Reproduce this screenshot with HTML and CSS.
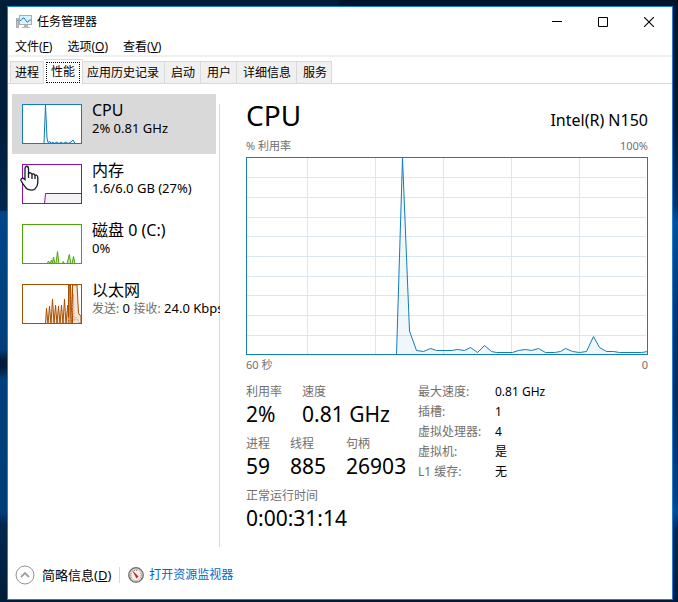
FILE: index.html
```
<!DOCTYPE html>
<html lang="zh-CN">
<head>
  <meta charset="UTF-8">
  <meta name="viewport" content="width=device-width, initial-scale=1.0">
  <title>任务管理器</title>
  <link rel="stylesheet" href="styles.css">
</head>
<body>
  <div class="window">
    <header class="titlebar">
      <svg class="app-icon" width="16" height="16" viewBox="0 0 16 16">
        <path d="M0.500 4.500h2v9h-2z" fill="#c4c7c9" stroke="#a4a8aa"/>
        <path d="M1 6.500h1" stroke="#4caf50"/>
        <rect x="3.500" y="1.500" width="12" height="9" fill="#dcf1fb" stroke="#a9adb0"/>
        <path d="M4 6.500h1l2-2.500h1l3 4h1l1.500-2h1.500" fill="none" stroke="#1d83b8"/>
        <path d="M8 11h4v2h2v1H6v-1h2z" fill="#b4b7b9"/>
      </svg>
      <h1 class="title">任务管理器</h1>
      <div class="window-controls">
        <button class="control-btn" aria-label="最小化">
          <svg width="10" height="10" viewBox="0 0 10 10"><path d="M0 4.500h10" stroke="#000"/></svg>
        </button>
        <button class="control-btn" aria-label="最大化">
          <svg width="10" height="10" viewBox="0 0 10 10"><path d="M0.500 0.500h9v9h-9z" fill="none" stroke="#000"/></svg>
        </button>
        <button class="control-btn" aria-label="关闭">
          <svg width="10" height="10" viewBox="0 0 10 10"><path d="M0 0l10 10M10 0L0 10" stroke="#000" stroke-width="1.1"/></svg>
        </button>
      </div>
    </header>

    <nav class="menubar">
      <button class="menu-btn">文件(<u>F</u>)</button>
      <button class="menu-btn">选项(<u>O</u>)</button>
      <button class="menu-btn">查看(<u>V</u>)</button>
    </nav>

    <div class="tabs" role="tablist">
      <button class="tab" role="tab">进程</button>
      <button class="tab active" role="tab" aria-selected="true"><span class="tab-focus">性能</span></button>
      <button class="tab" role="tab">应用历史记录</button>
      <button class="tab" role="tab">启动</button>
      <button class="tab" role="tab">用户</button>
      <button class="tab" role="tab">详细信息</button>
      <button class="tab" role="tab">服务</button>
    </div>

    <main class="content">
      <div class="sidebar">
        <button class="resource selected">
          <svg class="thumb thumb-cpu" viewBox="0 0 58 38">
            <path class="line" d="M21 38L22.500 0 24 33 25 37.500 27 36.500 28 38.500 30 37 31 38.500 34 37 36 38.500 38 37 40 38.500 43 37 45 38.500 48 37 50 35 52 38.500H58"/>
          </svg>
          <span class="resource-text">
            <span class="resource-name">CPU</span>
            <span class="resource-info">2% 0.81 GHz</span>
          </span>
        </button>
        <button class="resource">
          <svg class="thumb thumb-memory" viewBox="0 0 58 38">
            <path class="line" d="M21.500 39L22.500 28.500H59V39z"/>
          </svg>
          <span class="resource-text">
            <span class="resource-name">内存</span>
            <span class="resource-info">1.6/6.0 GB (27%)</span>
          </span>
          <svg class="pointer" width="19" height="26" viewBox="0 0 19 26">
            <path d="M5 14.500V3.500C5 0.500 8.500 0.500 8.500 3.500V9C9 7 12 7.500 12 10 12.500 8 15 8.500 15 11 15.500 9.500 17.800 10 17.800 12.500V18C17.800 21 16 23 14.500 24.500 12 25.500 8 25 6.500 23.500 4 20.500 2 18 1 15.500 0.500 13 3 12.500 5 14.500zM8.500 9v4M12 10v4M15 11v3" fill="#fff" stroke="#181828" stroke-width="1.300"/>
          </svg>
        </button>
        <button class="resource">
          <svg class="thumb thumb-disk" viewBox="0 0 58 38">
            <path class="line" d="M24 39L25.500 36 27 39 28.500 35 29.500 38 30.500 32 32 39 33 38 34.500 26.500 36 39H39L40.300 36.500 41.500 39H44L46.300 29.500 48 39H49L50.500 31.500 52 39"/>
          </svg>
          <span class="resource-text">
            <span class="resource-name">磁盘 0 (C:)</span>
            <span class="resource-info">0%</span>
          </span>
        </button>
        <button class="resource">
          <svg class="thumb thumb-network" viewBox="0 0 58 38">
            <path class="line" d="M22.500 39L23.500 23 25 39 26.500 21 28 39 29.500 14 31 39 32.500 20 34 39 35.500 21 37 39 38.500 20 40 39 41.500 14 43 39 44.700 20 45.500 38 46 0H47.500L48 38 49.500 0H54L55.500 28 56.500 30 58 31V39z"/>
            <path class="line" d="M45.500 0V38M47 0V38M49.500 0V38"/>
            <path class="line dashed" d="M45 38L46 32 47 38 49 28 50.500 9 51 36 53 32 55 36 57 38"/>
          </svg>
          <span class="resource-text">
            <span class="resource-name">以太网</span>
            <span class="resource-info"><span class="muted">发送:</span> 0 <span class="muted">接收:</span> 24.0 Kbps</span>
          </span>
        </button>
      </div>

      <section class="details">
        <div class="details-header">
          <h2>CPU</h2>
          <span class="model">Intel(R) N150</span>
        </div>
        <div class="axis axis-top"><span>% 利用率</span><span>100%</span></div>
        <svg class="chart" viewBox="0 0 400 196" preserveAspectRatio="none">
          <path class="grid" d="M60.500 0V196M128.500 0V196M196.500 0V196M264.500 0V196M332.500 0V196M0 19.500H399M0 39.500H399M0 59.500H399M0 78.500H399M0 98.500H399M0 118.500H399M0 137.500H399M0 157.500H399M0 177.500H399"/>
          <path class="line" d="M149.500 197L155.500 0 162.500 173 169.500 192.500 176.500 193.500 183.500 190.500 189.500 192.500H204.500L210.500 191.500 217.500 192.500 223.500 189.500 230.500 194.500 237.500 187.500 244.500 193.500 249.500 194.500H265.500L271.500 192.500 278.500 191.500 284.500 192.500 291.500 190.500 298.500 194.500H307.500L313.500 193.500 318.500 190.500 325.500 193.500 332.500 194.500 339.500 193.500 346.500 178.500 352.500 189.500 359.500 193.500H366.500L372.500 194.500H394.500L401 193.500V197z"/>
        </svg>
        <div class="axis"><span>60 秒</span><span>0</span></div>

        <div class="stats">
          <div class="stats-main">
            <dl class="stats-row">
              <div class="stat"><dt>利用率</dt><dd>2%</dd></div>
              <div class="stat"><dt>速度</dt><dd>0.81 GHz</dd></div>
            </dl>
            <dl class="stats-row">
              <div class="stat"><dt>进程</dt><dd>59</dd></div>
              <div class="stat"><dt>线程</dt><dd>885</dd></div>
              <div class="stat"><dt>句柄</dt><dd>26903</dd></div>
            </dl>
            <dl class="stats-row">
              <div class="stat"><dt>正常运行时间</dt><dd>0:00:31:14</dd></div>
            </dl>
          </div>
          <table class="specs">
            <tr><th scope="row">最大速度:</th><td>0.81 GHz</td></tr>
            <tr><th scope="row">插槽:</th><td>1</td></tr>
            <tr><th scope="row">虚拟处理器:</th><td>4</td></tr>
            <tr><th scope="row">虚拟机:</th><td>是</td></tr>
            <tr><th scope="row">L1 缓存:</th><td>无</td></tr>
          </table>
        </div>
      </section>
    </main>

    <footer class="footer">
      <button class="fewer-btn">
        <svg width="20" height="20" viewBox="0 0 20 20">
          <circle cx="10" cy="10" r="9" fill="#fff" stroke="#949494"/>
          <path d="M6 12l4-4 4 4" fill="none" stroke="#a0a0a0" stroke-width="1.800"/>
        </svg>
        <span>简略信息(<u>D</u>)</span>
      </button>
      <a class="monitor-link" href="#">
        <svg width="16" height="16" viewBox="0 0 16 16">
          <circle cx="8" cy="8" r="7.200" fill="#fff" stroke="#77736e" stroke-width="1.500"/>
          <circle cx="8" cy="8" r="5.500" fill="#f8f5ef" stroke="#c6beb4"/>
          <path d="M3.500 11a5 5 0 0 1 0-5M12.500 11a5 5 0 0 0 0-5M6 3.500h4" fill="none" stroke="#8b877f" stroke-dasharray="1 1"/>
          <path d="M4 3l6.500 6.500-2 2z" fill="#d91e18"/>
        </svg>
        <span>打开资源监视器</span>
      </a>
    </footer>
  </div>
</body>
</html>
```
FILE: styles.css
```
/* Global Styles */
* {
  box-sizing: border-box;
}

body {
  margin: 0;
  padding: 6px 5px 2px 7px;
  min-height: 100vh;
  display: flex;
  font-family: "Noto Sans", "Noto Sans CJK SC", sans-serif;
  font-size: 12px;
  line-height: 16px;
  color: #000;
  background:
    linear-gradient(#001e38 0, #001d3a 20%, #002850 35%, #004788 35%, #003f7c 58%, #001c38 60%, #001c38 61%, #003f7c 63%, #003e78 85%, #00294f 87%, #001d3a 100%) left / 50% 100% no-repeat,
    linear-gradient(#00152c 0, #001a36 20%, #003468 34%, #005098 37%, #003a74 50%, #002f5c 65%, #004080 83%, #004c92 85%, #002a54 88%, #001c3a 100%) right / 50% 100% no-repeat;
}

button {
  font: inherit;
  color: inherit;
  background: none;
  border: 0;
  padding: 0;
  margin: 0;
  text-align: left;
}

svg {
  display: block;
  flex: none;
}

h1, h2, dl, dd {
  margin: 0;
  font-weight: normal;
}

.muted {
  font-size: 12px;
  color: #707070;
}

.window {
  flex: 1;
  min-width: 0;
  display: flex;
  flex-direction: column;
  background: #fff;
  border: 1px solid #1a80d8;
}

/* Title bar */
.titlebar {
  display: flex;
  align-items: center;
  height: 29px;
  padding-left: 8px;
}

.title {
  flex: 1;
  margin-left: 5px;
  font-size: 12px;
}

.window-controls {
  display: flex;
}

.control-btn {
  width: 46px;
  height: 29px;
  display: flex;
  justify-content: center;
  align-items: center;
}

/* Menu bar */
.menubar {
  display: flex;
  gap: 15px;
  height: 21px;
  padding: 2px 7px 0;
  border-bottom: 2px solid #f0f0f0;
}

.menu-btn {
  line-height: 17px;
}

/* Tabs */
.tabs {
  display: flex;
  align-items: flex-end;
  height: 27px;
  padding-left: 2px;
  border-bottom: 1px solid #d9d9d9;
}

.tab {
  height: 22px;
  padding: 0 5px 0 6px;
  background: #f0f0f0;
  border: 1px solid #d9d9d9;
  border-width: 1px 1px 0 0;
}

.tab:first-child {
  padding: 0 4px;
  border-left-width: 1px;
}

.tab:last-child {
  padding-right: 4px;
}

.tab.active {
  height: 25px;
  margin-bottom: -1px;
  padding: 0 2px;
  background: #fff;
}

.tab.active + .tab {
  padding: 0 5px 0 4px;
}

.tab-focus {
  display: block;
  padding: 1px 4px 2px;
  border: 1px dotted #000;
}

/* Content */
.content {
  flex: 1;
  display: flex;
  padding-left: 4px;
}

.sidebar {
  width: 208px;
  flex: none;
  padding-top: 10px;
  overflow: hidden;
  background: linear-gradient(#d9d9d9, #d9d9d9) right 20px / 1px 100% no-repeat;
}

.resource {
  position: relative;
  display: flex;
  width: 204px;
  height: 60px;
  padding: 10px;
}

.resource.selected {
  background: #d9d9d9;
}

.resource-text {
  margin: -4px 0 0 10px;
  white-space: nowrap;
}

.resource-name,
.resource-info {
  display: block;
}

.resource-name {
  font-size: 16px;
  line-height: 20px;
}

.resource-info {
  font-size: 13px;
  line-height: 17px;
}

.thumb {
  width: 60px;
  height: 40px;
  background: #fff;
  border: 1px solid;
}

.line {
  fill: #1179b110;
  stroke: currentColor;
  stroke-width: 1;
}

.thumb-cpu,
.chart {
  color: #117dbb;
}

.thumb-memory {
  color: #8b12ae;
}

.thumb-memory .line {
  fill: #f4f2f4;
}

.thumb-disk {
  color: #4da60c;
}

.thumb-disk .line {
  fill: #4da60c55;
}

.thumb-network {
  color: #a74f01;
}

.thumb-network .line {
  fill: #f8e4d8;
}

.thumb-network .dashed {
  fill: none;
  stroke: #d99b78;
  stroke-dasharray: 2 1;
}

.pointer {
  position: absolute;
  left: 8px;
  top: 11px;
}

/* Details */
.details {
  flex: 1;
  min-width: 0;
  padding: 11px 24px 0 26px;
}

.details-header {
  display: flex;
  justify-content: space-between;
  align-items: baseline;
}

.details-header h2 {
  font-size: 28px;
  line-height: 40px;
}

.model {
  font-size: 16px;
}

.axis {
  display: flex;
  justify-content: space-between;
  font-size: 11px;
  line-height: 20px;
  color: #707070;
}

.axis-top {
  line-height: 22px;
}

.chart {
  width: 100%;
  height: 198px;
  border: 1px solid;
}

.grid {
  fill: none;
  stroke: #d9e7f1;
}

/* Stats */
.stats {
  display: flex;
  padding-top: 7px;
}

.stats-main {
  width: 172px;
  flex: none;
}

.stats-row {
  display: flex;
  gap: 20px;
  height: 52px;
  white-space: nowrap;
}

dt {
  line-height: 20px;
  color: #707070;
}

dd {
  font-size: 21px;
  line-height: 24px;
}

.specs {
  border-collapse: collapse;
  align-self: flex-start;
}

.specs th,
.specs td {
  height: 20px;
  padding: 0;
  text-align: left;
  font-weight: normal;
}

.specs th {
  width: 77px;
  color: #707070;
}

/* Footer */
.footer {
  display: flex;
  align-items: center;
  height: 52px;
  padding: 3px 7px 0;
}

.fewer-btn,
.monitor-link {
  display: flex;
  align-items: center;
}

.fewer-btn {
  gap: 7px;
  padding-right: 8px;
  font-size: 13px;
}

.monitor-link {
  gap: 5px;
  padding-left: 8px;
  border-left: 1px solid #d9d9d9;
  color: #0066cc;
  text-decoration: none;
}
```
